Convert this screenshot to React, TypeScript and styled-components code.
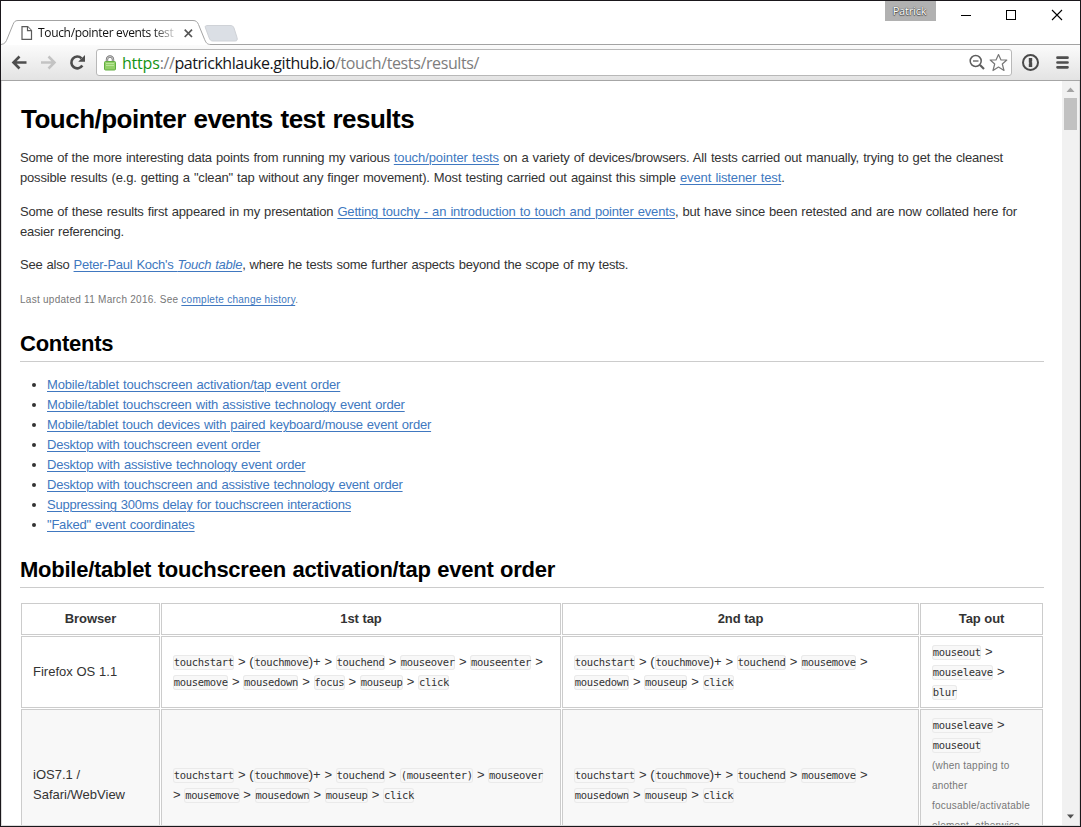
import React from 'react';
import styled, { createGlobalStyle } from 'styled-components';

const Global = createGlobalStyle`
  *, *::before, *::after { box-sizing: border-box; }
  body { margin: 0; background: #fff; }
`;

const Window = styled.div`
  width: 1081px;
  height: 827px;
  border: 1px solid #1a171b;
  background: #fff;
  display: flex;
  flex-direction: column;
  overflow: hidden;
  font-family: 'Liberation Sans', Arial, sans-serif;
`;

const TitleBar = styled.header`
  height: 44px;
  flex: none;
  display: flex;
  justify-content: space-between;
  align-items: flex-start;
  position: relative;
`;

const TabShape = styled.svg`
  position: absolute;
  left: 0;
  top: 0;
`;

const Tab = styled.div`
  position: relative;
  display: flex;
  align-items: center;
  height: 24px;
  margin: 20px 0 0 20px;
`;

const TabTitle = styled.span`
  font: 12px/20px 'Open Sans', 'Noto Sans', sans-serif;
  letter-spacing: -0.33px;
  width: 138px;
  margin: 0 8px 0 5px;
  white-space: nowrap;
  color: #111;
  -webkit-mask-image: linear-gradient(90deg, #000 114px, transparent 142px);
  mask-image: linear-gradient(90deg, #000 114px, transparent 142px);
`;

const Caption = styled.div`
  display: flex;
  align-items: flex-start;
`;

const Profile = styled.div`
  width: 51px;
  height: 20px;
  background: #b1b1b1;
  color: #fff;
  text-align: center;
  font: 11px/20px 'Open Sans', 'Noto Sans', sans-serif;
  letter-spacing: -0.2px;
  padding-right: 2px;
  text-shadow: 0 0 1px #444, 0 0 1px #444, 0 1px 1px #555;
`;

const Toolbar = styled.nav`
  height: 36px;
  flex: none;
  display: flex;
  align-items: center;
  background: linear-gradient(#fbfbfb, #e3e3e3);
  border-bottom: 1px solid #a6a6a6;
  padding: 0 10px 0 10px;
`;

const Omnibox = styled.div`
  margin: 0 9px 0 10px;
  flex: 1;
  height: 27px;
  border: 1px solid #b8b8b8;
  border-radius: 3px;
  background: #fff;
  display: flex;
  align-items: center;
  padding: 0 3px 0 7px;
`;

const Url = styled.div`
  flex: 1;
  margin-left: 6px;
  font: 16px/24px 'Open Sans', 'Noto Sans', sans-serif;
  letter-spacing: -0.38px;
  white-space: nowrap;
  color: #7d7d7d;
  b { font-weight: 400; color: #15161a; letter-spacing: -0.45px; }
  i { font-style: normal; color: #149414; letter-spacing: -0.2px; }
`;

const Viewport = styled.div`
  flex: 1;
  min-height: 0;
  display: flex;
  border: solid #dcdcdc;
  border-width: 0 1px 1px;
`;

const Page = styled.main`
  width: 1060px;
  padding: 20px 18px 0 18px;
  overflow: hidden;
  color: #333;
  font-size: 13px;
  line-height: 20px;
`;

const H1 = styled.h1`
  margin: 0 0 11px;
  padding-left: 1px;
  font-size: 26px;
  line-height: 36px;
  letter-spacing: -0.51px;
  word-spacing: 1px;
  color: #000;
`;

const H2 = styled.h2`
  margin: 0 0 13px;
  font-size: 22px;
  line-height: 30px;
  letter-spacing: -0.25px;
  word-spacing: 0.7px;
  padding-bottom: 2px;
  border-bottom: 1px solid #ccc;
  color: #000;
  white-space: nowrap;
`;

const P = styled.p<{ $gap?: number }>`
  margin: 0 0 ${(p) => p.$gap ?? 14}px;
  word-spacing: 0.7px;
`;

const Line = styled.span<{ $ls?: number }>`
  display: block;
  white-space: nowrap;
  letter-spacing: ${(p) => p.$ls ?? 0}px;
`;

const Run = styled.span<{ $ls: number }>`
  letter-spacing: ${(p) => p.$ls}px;
`;

const Link = styled.a<{ $ls?: number }>`
  color: #4078c0;
  text-decoration: underline;
  text-underline-offset: 2px;
  text-decoration-thickness: 1px;
  letter-spacing: ${(p) => (p.$ls === undefined ? 'inherit' : `${p.$ls}px`)};
`;

const Small = styled.small`
  font-size: 10px;
  line-height: 1;
  color: #777;
  word-spacing: 0;
`;

const List = styled.ul`
  margin: 0 0 20px;
  padding: 0 0 0 27px;
  word-spacing: 0.7px;
`;

const Table = styled.table`
  width: 1024px;
  table-layout: fixed;
  border-collapse: separate;
  border-spacing: 1px;
  margin-top: 14px;
  word-spacing: 0.15px;
`;

const Th = styled.th<{ $w: number }>`
  width: ${(p) => p.$w}px;
  border: 1px solid #ccc;
  padding: 5px 11px;
  height: 32px;
  letter-spacing: -0.1px;
`;

const Td = styled.td<{ $shade?: boolean }>`
  border: 1px solid #ccc;
  padding: 5px 11px;
  vertical-align: middle;
  background: ${(p) => (p.$shade ? '#f8f8f8' : '#fff')};
`;

const Code = styled.code`
  font: 10.5px/12px 'DejaVu Sans Mono', monospace;
  letter-spacing: -0.34px;
  color: #333;
  background: #f8f8f8;
  box-shadow: inset 0 0 0 1px #eaeaea;
  border-radius: 3px;
  padding: 1px 0.5px 2px 0.8px;
`;

const ScrollBar = styled.aside`
  width: 17px;
  flex: none;
  background: #f1f1f1;
  display: flex;
  flex-direction: column;
  align-items: center;
`;

const Thumb = styled.div`
  width: 13px;
  height: 32px;
  background: #c1c1c1;
  margin-bottom: auto;
`;

const toc: [string, number][] = [
  ['Mobile/tablet touchscreen activation/tap event order', -0.14],
  ['Mobile/tablet touchscreen with assistive technology event order', -0.17],
  ['Mobile/tablet touch devices with paired keyboard/mouse event order', -0.2],
  ['Desktop with touchscreen event order', -0.217],
  ['Desktop with assistive technology event order', -0.196],
  ['Desktop with touchscreen and assistive technology event order', -0.21],
  ['Suppressing 300ms delay for touchscreen interactions', -0.24],
  ['"Faked" event coordinates', -0.216],
];

/** Renders event names as code; "[name]" marks a code token. */
const Seq = ({ lines }: { lines: string[] }) => (
  <>
    {lines.map((line, n) => (
      <Line key={n}>
        {line.split(/(\[[^\]]+\])/).map((part, i) =>
          part.startsWith('[') ? <Code key={i}>{part.slice(1, -1)}</Code> : part,
        )}
      </Line>
    ))}
  </>
);

const secondTap = [
  '[touchstart] > ([touchmove])+ > [touchend] > [mousemove] >',
  '[mousedown] > [mouseup] > [click]',
];

export default function App() {
  return (
    <Window>
      <Global />
      <TitleBar>
        <TabShape width="1079" height="44" viewBox="1 1 1079 44" fill="none">
          <path d="M1 44.5C5 44 6 42 7.500 38L13 24.500C14 22 15 20.500 18 20.500H193C196 20.500 197.500 22 198.500 24.500L204 38C206 43 207 44.500 211 44.500H1080" stroke="#a3a3a3" />
          <path d="M205.500 28C204.700 26 205.500 25.500 208 25.500H230C232.500 25.500 233 26 234 28L237 37.500C237.700 40 237 41 235 41H213C211 41 210 40 209.200 38Z" fill="#dbdfe5" stroke="#cfd2d7" />
        </TabShape>
        <Tab>
          <svg width="12" height="14" viewBox="0 0 12 14" fill="#fff" stroke="#5a5a5a" strokeWidth="1.200">
            <path d="M1 .7H6.700L10.500 4.500V13.300H1Z" />
            <path d="M6.500 .7V4.700H10.500" />
          </svg>
          <TabTitle>Touch/pointer events test</TabTitle>
          <svg width="9" height="9" viewBox="0 0 9 9" stroke="#555" strokeWidth="1.700"><path d="M.7 .7L8 8M8 .7L.7 8" /></svg>
        </Tab>
        <Caption>
          <Profile>Patrick</Profile>
          <svg width="144" height="28" viewBox="936 1 144 28" fill="none" stroke="#000" shapeRendering="crispEdges">
            <path d="M961 15.500H971" />
            <rect x="1006.500" y="10.500" width="9" height="9" />
            <path d="M1052 10L1062 20M1062 10L1052 20" shapeRendering="auto" strokeWidth="1.100" />
          </svg>
        </Caption>
      </TitleBar>
      <Toolbar>
        <svg width="75" height="18" viewBox="11 54 75 18" fill="none">
          <path d="M26.500 62.500H14M19.500 56.500L13.500 62.500L19.500 68.500" stroke="#4d4d4d" strokeWidth="2.600" />
          <path d="M41 62.500H54M48.500 56.500L54.500 62.500L48.500 68.500" stroke="#c3c3c3" strokeWidth="2.500" />
          <path d="M82.300 65.500A5.900 5.900 0 1 1 81.500 58.300" stroke="#4d4d4d" strokeWidth="2.600" />
          <path d="M85 55V61.800H78.200Z" fill="#4d4d4d" />
        </svg>
        <Omnibox>
          <svg width="12" height="16" viewBox="0 0 12 16" fill="none">
            <path d="M3 8V4.500A3 3 0 0 1 9 4.500V8" stroke="#777" strokeWidth="2.400" />
            <path d="M3 8V4.500A3 3 0 0 1 9 4.500V8" stroke="#ddd" strokeWidth=".8" />
            <rect x=".5" y="6.500" width="11" height="8.500" rx="1" fill="#92d068" stroke="#62ae42" />
            <path d="M2 8.500H10M2 10.500H10" stroke="#b9e599" />
          </svg>
          <Url><i>https</i>://<b>patrickhlauke.github.io</b>/touch/tests/results/</Url>
          <svg width="40" height="20" viewBox="968 53 40 20" fill="none" stroke="#5d5d5d">
            <circle cx="975.700" cy="61" r="5.500" strokeWidth="1.500" />
            <path d="M973 61H978.500" strokeWidth="1.300" />
            <path d="M980 65L984 69" strokeWidth="2.200" />
            <path d="M998.500 54.500L1001 60H1006.800L1002.300 64L1004 70.500L998.500 67L993 70.500L994.700 64L990.200 60H996Z" stroke="#777" strokeWidth="1.200" strokeLinejoin="round" />
          </svg>
        </Omnibox>
        <svg width="49" height="18" viewBox="1021 54 49 18" fill="none">
          <circle cx="1030.500" cy="62.500" r="7.500" stroke="#4a4a4a" strokeWidth="2" />
          <path d="M1028.800 58H1032.200V61.200L1031.600 62L1032.200 62.600V67H1028.800V63.800L1029.400 63L1028.800 62.400Z" fill="#4a4a4a" />
          <path d="M1057.500 57.700H1067.500M1057.500 62.500H1067.500M1057.500 67.300H1067.500" stroke="#4f4f4f" strokeWidth="2.700" strokeLinecap="round" />
        </svg>
      </Toolbar>
      <Viewport>
        <Page>
          <H1>Touch/pointer events test results</H1>
          <P>
            <Line $ls={-0.226}>Some of the more interesting data points from running my various <Link $ls={-0.09}>touch/pointer tests</Link><Run $ls={-0.177}> on a variety of devices/browsers. All tests carried out manually, trying to get the cleanest</Run></Line>
            <Line $ls={-0.18}>possible results (e.g. getting a "clean" tap without any finger movement). Most testing carried out against this simple <Link $ls={-0.11}>event listener test</Link>.</Line>
          </P>
          <P $gap={13}>
            <Line $ls={-0.2}>Some of these results first appeared in my presentation <Link $ls={-0.163}>Getting touchy - an introduction to touch and pointer events</Link>, but have since been retested and are now collated here for</Line>
            <Line $ls={-0.23}>easier referencing.</Line>
          </P>
          <P $gap={14}>
            <Line $ls={-0.23}>See also <Link $ls={-0.26}>Peter-Paul Koch's <em>Touch table</em></Link>, where he tests some further aspects beyond the scope of my tests.</Line>
          </P>
          <P $gap={20}>
            <Line $ls={0.27}><Small>Last updated 11 March 2016. See <Link>complete change history</Link>.</Small></Line>
          </P>
          <H2>Contents</H2>
          <List>
            {toc.map(([t, ls]) => (
              <li key={t}><Line $ls={ls}><Link>{t}</Link></Line></li>
            ))}
          </List>
          <H2>Mobile/tablet touchscreen activation/tap event order</H2>
          <Table>
            <thead>
              <tr>
                <Th $w={139}>Browser</Th>
                <Th $w={400}>1st tap</Th>
                <Th $w={357}>2nd tap</Th>
                <Th $w={123}>Tap out</Th>
              </tr>
            </thead>
            <tbody>
              <tr>
                <Td>Firefox OS 1.1</Td>
                <Td><Seq lines={['[touchstart] > ([touchmove])+ > [touchend] > [mouseover] > [mouseenter] >', '[mousemove] > [mousedown] > [focus] > [mouseup] > [click]']} /></Td>
                <Td><Seq lines={secondTap} /></Td>
                <Td><Seq lines={['[mouseout] >', '[mouseleave] >', '[blur]']} /></Td>
              </tr>
              <tr>
                <Td $shade>iOS7.1 / Safari/WebView</Td>
                <Td $shade><Seq lines={['[touchstart] > ([touchmove])+ > [touchend] > [(mouseenter)] > [mouseover]', '> [mousemove] > [mousedown] > [mouseup] > [click]']} /></Td>
                <Td $shade><Seq lines={secondTap} /></Td>
                <Td $shade>
                  <Seq lines={['[mouseleave] >', '[mouseout]']} />
                  {['(when tapping to', 'another', 'focusable/activatable', 'element, otherwise', 'nothing)'].map((t) => (
                    <Line key={t} $ls={0.22}><Small>{t}</Small></Line>
                  ))}
                </Td>
              </tr>
            </tbody>
          </Table>
        </Page>
        <ScrollBar>
          <svg width="17" height="17"><path d="M4.500 11L8.500 6.500L12.500 11Z" fill="#a3a3a3" /></svg>
          <Thumb />
          <svg width="17" height="17"><path d="M5 6.500H12L8.500 10.500Z" fill="#505050" /></svg>
        </ScrollBar>
      </Viewport>
    </Window>
  );
}
